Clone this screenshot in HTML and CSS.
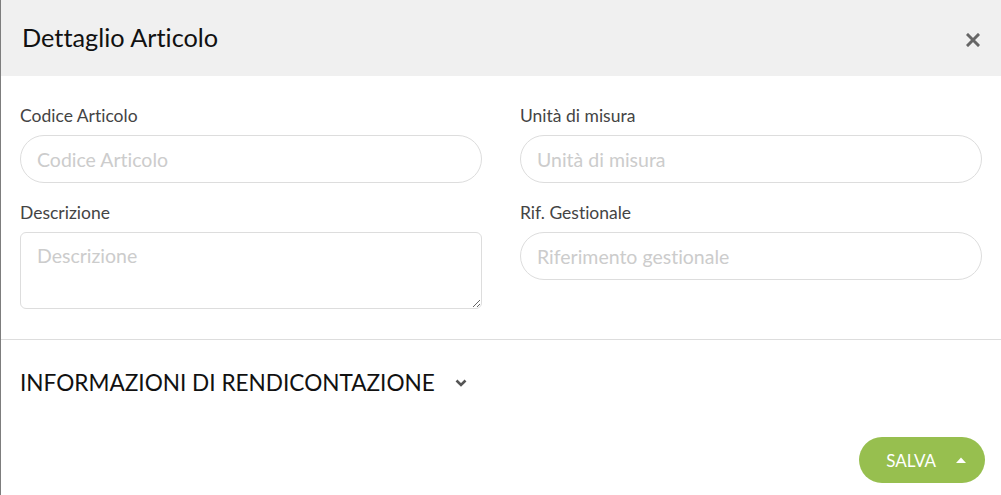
FILE: index.html
```html
<!DOCTYPE html>
<html lang="it">
<head>
    <meta charset="UTF-8">
    <meta name="viewport" content="width=device-width, initial-scale=1.0">
    <title>Dettaglio Articolo</title>
    <link rel="stylesheet" href="styles.css">
</head>
<body>
    <div class="modal">
        <div class="modal-header">
            <h2>Dettaglio Articolo</h2>
            <button class="close" aria-label="Chiudi">
                <svg width="14" height="14" viewBox="0 0 14 14">
                    <path d="M2 2 L12 12 M12 2 L2 12" stroke="#666" stroke-width="3" stroke-linecap="square"/>
                </svg>
            </button>
        </div>

        <div class="form">
            <div class="field">
                <label for="codice">Codice Articolo</label>
                <input type="text" id="codice" placeholder="Codice Articolo">
            </div>
            <div class="field">
                <label for="unita">Unità di misura</label>
                <input type="text" id="unita" placeholder="Unità di misura">
            </div>
            <div class="field">
                <label for="descrizione">Descrizione</label>
                <textarea id="descrizione" placeholder="Descrizione"></textarea>
            </div>
            <div class="field">
                <label for="rif">Rif. Gestionale</label>
                <input type="text" id="rif" placeholder="Riferimento gestionale">
            </div>
        </div>

        <div class="section">
            <h3>INFORMAZIONI DI RENDICONTAZIONE</h3>
            <svg class="chevron" width="12" height="8" viewBox="0 0 12 8">
                <path d="M1.5 1.5 L6 6 L10.5 1.5" fill="none" stroke="#555" stroke-width="2.6"/>
            </svg>
        </div>

        <div class="footer">
            <button class="save">
                SALVA
                <svg width="12" height="6" viewBox="0 0 12 6">
                    <path d="M1 6 L6 0.5 L11 6 Z" fill="#fff"/>
                </svg>
            </button>
        </div>
    </div>
</body>
</html>
```

FILE: styles.css
```css
body {
    font-family: Lato, "Open Sans", sans-serif;
    font-variant-ligatures: none;
    margin: 0;
    padding: 0;
    background-color: #fff;
    border-left: 1px solid #7d7d7d;
    min-height: 100vh;
    box-sizing: border-box;
}
.modal {
    background-color: #fff;
}
.modal-header {
    display: flex;
    align-items: center;
    justify-content: space-between;
    height: 76px;
    padding: 0 21px 0 21px;
    background-color: #f0f0f0;
}
.modal-header h2 {
    margin: 0;
    font-size: 25.3px;
    font-weight: 400;
    color: #111;
    padding-bottom: 2px;
}
.close {
    background: none;
    border: none;
    padding: 0;
    margin-top: 4px;
    cursor: pointer;
    display: flex;
}
.form {
    display: grid;
    grid-template-columns: 1fr 1fr;
    column-gap: 38px;
    row-gap: 20px;
    padding: 30px 19px 30px 19px;
    border-bottom: 1px solid #ddd;
    align-items: start;
}
.field label {
    display: block;
    font-size: 17.5px;
    line-height: 20px;
    color: #444;
    margin-bottom: 9px;
}
input, textarea {
    display: block;
    width: 100%;
    box-sizing: border-box;
    font-family: Lato, "Open Sans", sans-serif;
    font-variant-ligatures: none;
    font-size: 19.5px;
    color: #333;
    border: 1px solid #ddd;
    background: #fff;
    outline: none;
}
input {
    height: 48px;
    border-radius: 24px;
    padding: 0 16px;
}
textarea {
    height: 77px;
    border-radius: 6px;
    padding: 11px 16px;
    resize: vertical;
}
input::placeholder, textarea::placeholder {
    color: #ccc;
}
.section {
    display: flex;
    align-items: center;
    gap: 20px;
    padding: 30px 19px 0 19px;
}
.section h3 {
    margin: 0;
    font-size: 22.6px;
    font-weight: 400;
    color: #111;
    line-height: 26px;
}
.footer {
    display: flex;
    justify-content: flex-end;
    padding: 41px 16px 0 0;
}
.save {
    display: flex;
    align-items: center;
    gap: 19px;
    height: 46px;
    padding: 0 18px 0 27px;
    border: none;
    border-radius: 23px;
    background-color: #97bf4f;
    color: #fff;
    font-family: Lato, "Open Sans", sans-serif;
    font-size: 17px;
    cursor: pointer;
}
```
